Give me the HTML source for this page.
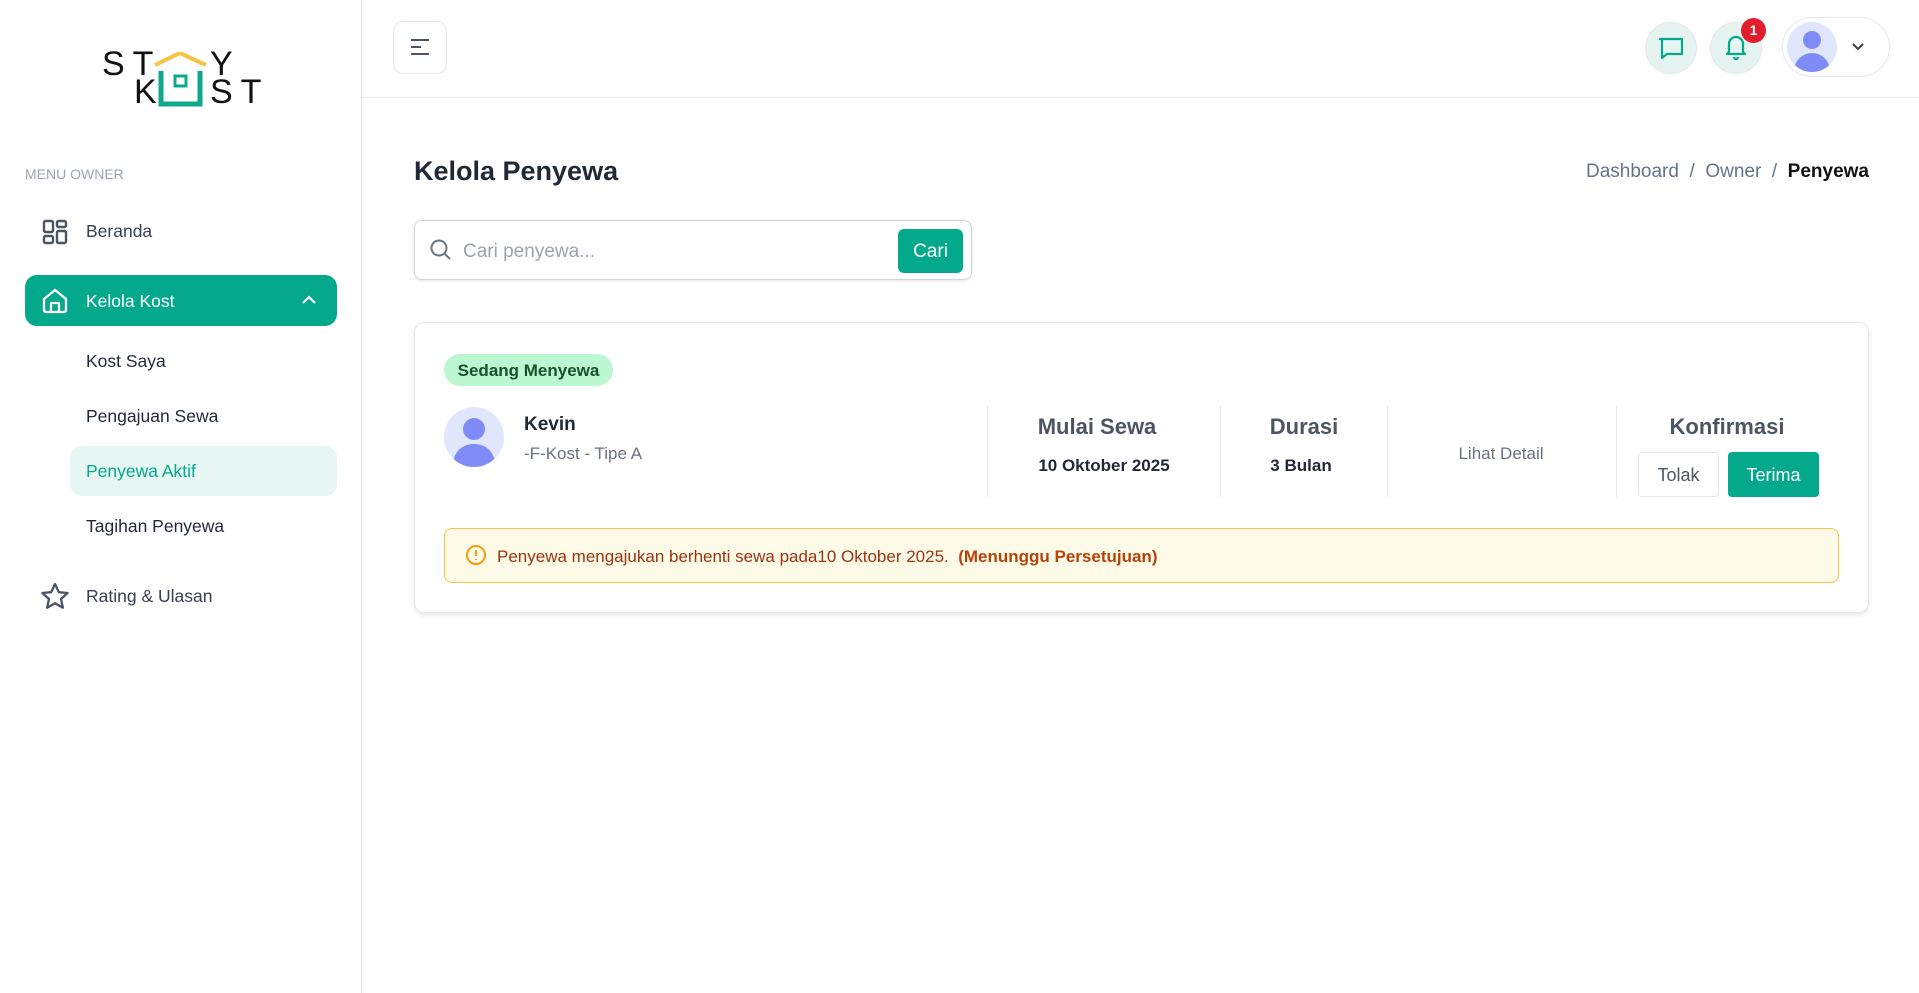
<!DOCTYPE html>
<html><head><meta charset="utf-8"><style>
*{box-sizing:border-box;margin:0;padding:0}
body{width:1919px;height:993px;background:#fff;font-family:"Liberation Sans",sans-serif;color:#1f2937;position:relative;overflow:hidden}
.a{position:absolute}
.side{left:0;top:0;width:362px;height:993px;border-right:1px solid #e5e7eb;background:#fff}
.nav{font-size:17.5px;color:#374151;white-space:nowrap}
.hdr{left:362px;top:0;right:0;height:98px;border-bottom:1px solid #e5e7eb}
.c{transform:translate(-50%,-50%);white-space:nowrap}
.vl{width:1px;background:#e5e7eb;top:406px;height:91px}
</style></head><body>
<div class="a side"></div>
<!-- logo -->
<div class="a" style="left:102px;top:47px;font-size:34px;letter-spacing:8px;color:#111;line-height:34px">ST</div>
<div class="a" style="left:210px;top:47px;font-size:34px;color:#111;line-height:34px">Y</div>
<div class="a" style="left:134px;top:75px;font-size:34px;color:#111;line-height:34px">K</div>
<div class="a" style="left:210px;top:75px;font-size:34px;letter-spacing:8px;color:#111;line-height:34px">ST</div>
<svg class="a" style="left:152px;top:52px" width="60" height="56" viewBox="0 0 60 56"><path d="M3 13 L28 1 L54 13" fill="none" stroke="#f6c342" stroke-width="4"/><path d="M9 19 V52 H48 V19" fill="none" stroke="#0fa88d" stroke-width="5"/><rect x="23" y="24" width="11" height="10" fill="none" stroke="#0fa88d" stroke-width="3"/></svg>

<div class="a" style="left:25px;top:166px;font-size:14px;color:#9ca3af">MENU OWNER</div>
<svg class="a" style="left:42px;top:219px" width="26" height="26" viewBox="0 0 26 26" fill="none" stroke="#4b5563" stroke-width="2.4"><rect x="2" y="2" width="9" height="11" rx="1.5"/><rect x="15" y="2" width="9" height="6" rx="1.5"/><rect x="2" y="17" width="9" height="7" rx="1.5"/><rect x="15" y="12" width="9" height="12" rx="1.5"/></svg>
<div class="a nav" style="left:86px;top:221px">Beranda</div>
<div class="a" style="left:25px;top:275px;width:312px;height:51px;background:#04a88b;border-radius:12px"></div>
<svg class="a" style="left:42px;top:288px" width="26" height="26" viewBox="0 0 26 26" fill="none" stroke="#fff" stroke-width="2.3" stroke-linejoin="round"><path d="M2 11 L13 2 L24 11 V22 a2 2 0 0 1 -2 2 H4 a2 2 0 0 1 -2 -2Z"/><path d="M9 24 V15 H17 V24"/></svg>
<div class="a nav" style="left:86px;top:291px;color:#fff">Kelola Kost</div>
<svg class="a" style="left:301px;top:294px" width="16" height="12" viewBox="0 0 16 12"><path d="M2 9 L8 3 L14 9" fill="none" stroke="#fff" stroke-width="2.2"/></svg>
<div class="a nav" style="left:86px;top:351px;color:#1f2937">Kost Saya</div>
<div class="a nav" style="left:86px;top:406px;color:#1f2937">Pengajuan Sewa</div>
<div class="a" style="left:70px;top:446px;width:267px;height:50px;background:#e6f6f3;border-radius:12px"></div>
<div class="a nav" style="left:86px;top:461px;color:#04a88b">Penyewa Aktif</div>
<div class="a nav" style="left:86px;top:516px;color:#1f2937">Tagihan Penyewa</div>
<svg class="a" style="left:40px;top:582px" width="30" height="28" viewBox="0 0 30 28"><path d="M15 2 L18.8 10.2 L27.6 11 L21 17 L22.9 25.8 L15 21.2 L7.1 25.8 L9 17 L2.4 11 L11.2 10.2Z" fill="none" stroke="#4b5563" stroke-width="2.3" stroke-linejoin="round"/></svg>
<div class="a nav" style="left:86px;top:586px">Rating &amp; Ulasan</div>

<div class="a hdr"></div>
<div class="a" style="left:393px;top:21px;width:54px;height:53px;border:1px solid #e5e7eb;border-radius:10px"></div>
<svg class="a" style="left:410px;top:38px" width="20" height="18" viewBox="0 0 20 18" stroke="#4b5563" stroke-width="2"><path d="M1 2H19M1 9H11M1 16H19"/></svg>
<div class="a" style="left:1645px;top:22px;width:52px;height:52px;border-radius:50%;background:#e6f4f1;border:1px solid #e5e7eb"></div>
<svg class="a" style="left:1658px;top:36px" width="26" height="26" viewBox="0 0 26 26" fill="none" stroke="#04a88b" stroke-width="2.2" stroke-linejoin="round"><path d="M2 3 H24 V18 H9 L4 22 V3Z"/></svg>
<div class="a" style="left:1710px;top:22px;width:52px;height:52px;border-radius:50%;background:#e6f4f1;border:1px solid #e5e7eb"></div>
<svg class="a" style="left:1724px;top:34px" width="24" height="26" viewBox="0 0 24 26" fill="none" stroke="#04a88b" stroke-width="2.2" stroke-linejoin="round"><path d="M5 18 V10 a7 7 0 0 1 14 0 V18 L21 20 H3Z"/><path d="M10 23 a2 2 0 0 0 4 0"/></svg>
<div class="a" style="left:1741px;top:18px;width:25px;height:25px;border-radius:50%;background:#e11d2e;color:#fff;font-size:14px;font-weight:bold;text-align:center;line-height:25px">1</div>
<div class="a" style="left:1782px;top:17px;width:108px;height:60px;border:1px solid #e5e7eb;border-radius:30px"></div>
<div class="a" style="left:1787px;top:22px;width:50px;height:50px;border-radius:50%;background:#e0e7fd;overflow:hidden"><div class="a" style="left:16px;top:9px;width:18px;height:18px;border-radius:50%;background:#7f8cf8"></div><div class="a" style="left:7px;top:31px;width:36px;height:30px;border-radius:18px 18px 0 0;background:#7f8cf8"></div></div>
<svg class="a" style="left:1851px;top:42px" width="14" height="10" viewBox="0 0 14 10"><path d="M2 2 L7 7 L12 2" fill="none" stroke="#374151" stroke-width="2"/></svg>

<div class="a" style="left:414px;top:156px;font-size:27px;font-weight:bold;color:#1f2937">Kelola Penyewa</div>
<div class="a" style="right:50px;top:161px;font-size:19px;color:#64748b;white-space:nowrap">Dashboard&nbsp; / &nbsp;Owner&nbsp; / &nbsp;<span style="color:#111;font-weight:bold">Penyewa</span></div>

<div class="a" style="left:414px;top:220px;width:558px;height:60px;border:1px solid #d1d5db;border-radius:8px;box-shadow:0 1px 3px rgba(0,0,0,.1)"></div>
<svg class="a" style="left:429px;top:238px" width="24" height="24" viewBox="0 0 24 24" fill="none" stroke="#6b7280" stroke-width="2"><circle cx="10" cy="10" r="7.5"/><path d="M15.5 15.5 L21 21"/></svg>
<div class="a" style="left:463px;top:241px;font-size:19px;color:#9ca3af">Cari penyewa...</div>
<div class="a" style="left:898px;top:229px;width:65px;height:44px;background:#04a88b;border-radius:6px;color:#fff;font-size:19px;text-align:center;line-height:46px">Cari</div>

<div class="a" style="left:414px;top:322px;width:1455px;height:291px;border:1px solid #e5e7eb;border-radius:10px;box-shadow:0 2px 5px rgba(0,0,0,.1)"></div>
<div class="a" style="left:444px;top:354px;width:169px;height:32px;background:#bbf7d0;border-radius:16px;color:#14532d;font-size:17px;font-weight:bold;text-align:center;line-height:33px">Sedang Menyewa</div>
<div class="a" style="left:444px;top:407px;width:60px;height:60px;border-radius:50%;background:#e0e7fd;overflow:hidden"><div class="a" style="left:19px;top:11px;width:22px;height:22px;border-radius:50%;background:#7f8cf8"></div><div class="a" style="left:9px;top:37px;width:42px;height:34px;border-radius:20px 20px 0 0;background:#7f8cf8"></div></div>
<div class="a" style="left:524px;top:414px;font-size:19px;font-weight:bold;color:#1f2937">Kevin</div>
<div class="a" style="left:524px;top:444px;font-size:17px;color:#6b7280">-F-Kost - Tipe A</div>
<div class="a vl" style="left:987px"></div><div class="a vl" style="left:1220px"></div><div class="a vl" style="left:1387px"></div><div class="a vl" style="left:1616px"></div>
<div class="a c" style="left:1097px;top:427px;font-size:22px;font-weight:bold;color:#4b5563">Mulai Sewa</div>
<div class="a c" style="left:1104px;top:466px;font-size:17px;font-weight:bold;color:#1f2937">10 Oktober 2025</div>
<div class="a c" style="left:1304px;top:427px;font-size:22px;font-weight:bold;color:#4b5563">Durasi</div>
<div class="a c" style="left:1301px;top:466px;font-size:17px;font-weight:bold;color:#1f2937">3 Bulan</div>
<div class="a c" style="left:1501px;top:454px;font-size:17px;color:#6b7280">Lihat Detail</div>
<div class="a c" style="left:1727px;top:427px;font-size:22px;font-weight:bold;color:#4b5563">Konfirmasi</div>
<div class="a" style="left:1638px;top:452px;width:81px;height:45px;border:1px solid #e5e7eb;border-radius:4px;font-size:18px;color:#4b5563;text-align:center;line-height:45px">Tolak</div>
<div class="a" style="left:1728px;top:452px;width:91px;height:45px;background:#04a88b;border-radius:4px;font-size:18px;color:#fff;text-align:center;line-height:47px">Terima</div>

<div class="a" style="left:444px;top:528px;width:1395px;height:55px;background:#fefae8;border:1px solid #f6c342;border-radius:8px"></div>
<svg class="a" style="left:465px;top:544px" width="22" height="22" viewBox="0 0 22 22" fill="none" stroke="#f59e0b" stroke-width="2"><circle cx="11" cy="11" r="9"/><path d="M11 6 V12 M11 15 V16"/></svg>
<div class="a" style="left:497px;top:547px;font-size:17px;color:#9a3412;white-space:nowrap">Penyewa mengajukan berhenti sewa pada10 Oktober 2025. &nbsp;<b style="color:#b4430a">(Menunggu Persetujuan)</b></div>
</body></html>
